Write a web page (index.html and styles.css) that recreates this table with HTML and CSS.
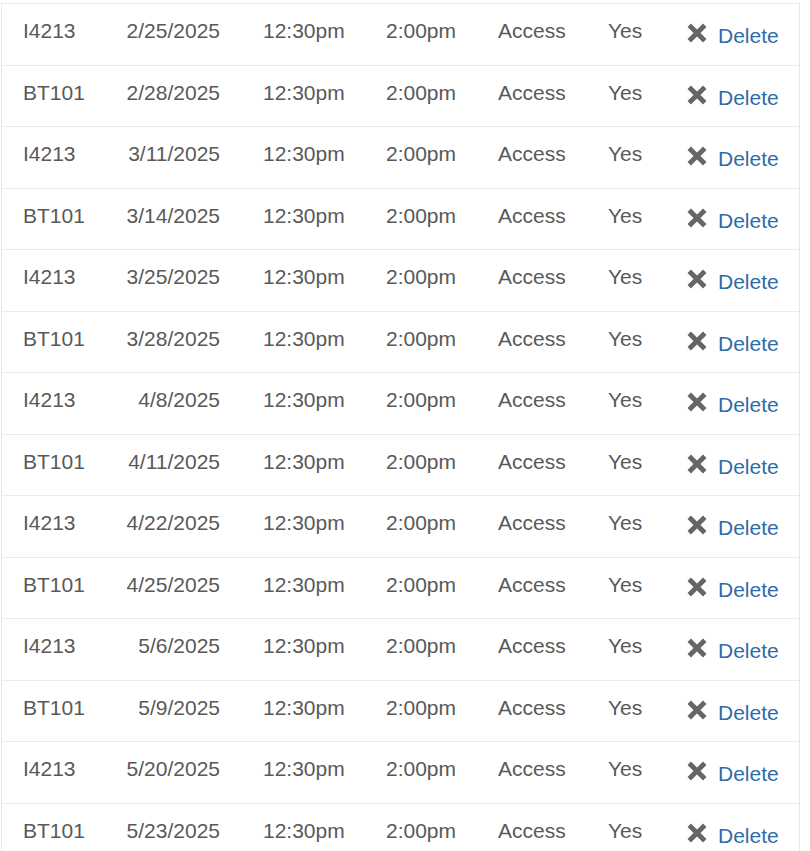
FILE: index.html
```html
<!DOCTYPE html>
<html>
<head>
<meta charset="utf-8">
<link rel="stylesheet" href="styles.css">
</head>
<body>
<div class="schedule">
  <div class="row"><div class="c course">I4213</div><div class="c date">2/25/2025</div><div class="c">12:30pm</div><div class="c">2:00pm</div><div class="c">Access</div><div class="c">Yes</div><div class="c action"><svg class="x" viewBox="0 0 18 18"><path d="M2 2L16 16M16 2L2 16"/></svg><a href="#">Delete</a></div></div>
  <div class="row"><div class="c course">BT101</div><div class="c date">2/28/2025</div><div class="c">12:30pm</div><div class="c">2:00pm</div><div class="c">Access</div><div class="c">Yes</div><div class="c action"><svg class="x" viewBox="0 0 18 18"><path d="M2 2L16 16M16 2L2 16"/></svg><a href="#">Delete</a></div></div>
  <div class="row"><div class="c course">I4213</div><div class="c date">3/11/2025</div><div class="c">12:30pm</div><div class="c">2:00pm</div><div class="c">Access</div><div class="c">Yes</div><div class="c action"><svg class="x" viewBox="0 0 18 18"><path d="M2 2L16 16M16 2L2 16"/></svg><a href="#">Delete</a></div></div>
  <div class="row"><div class="c course">BT101</div><div class="c date">3/14/2025</div><div class="c">12:30pm</div><div class="c">2:00pm</div><div class="c">Access</div><div class="c">Yes</div><div class="c action"><svg class="x" viewBox="0 0 18 18"><path d="M2 2L16 16M16 2L2 16"/></svg><a href="#">Delete</a></div></div>
  <div class="row"><div class="c course">I4213</div><div class="c date">3/25/2025</div><div class="c">12:30pm</div><div class="c">2:00pm</div><div class="c">Access</div><div class="c">Yes</div><div class="c action"><svg class="x" viewBox="0 0 18 18"><path d="M2 2L16 16M16 2L2 16"/></svg><a href="#">Delete</a></div></div>
  <div class="row"><div class="c course">BT101</div><div class="c date">3/28/2025</div><div class="c">12:30pm</div><div class="c">2:00pm</div><div class="c">Access</div><div class="c">Yes</div><div class="c action"><svg class="x" viewBox="0 0 18 18"><path d="M2 2L16 16M16 2L2 16"/></svg><a href="#">Delete</a></div></div>
  <div class="row"><div class="c course">I4213</div><div class="c date">4/8/2025</div><div class="c">12:30pm</div><div class="c">2:00pm</div><div class="c">Access</div><div class="c">Yes</div><div class="c action"><svg class="x" viewBox="0 0 18 18"><path d="M2 2L16 16M16 2L2 16"/></svg><a href="#">Delete</a></div></div>
  <div class="row"><div class="c course">BT101</div><div class="c date">4/11/2025</div><div class="c">12:30pm</div><div class="c">2:00pm</div><div class="c">Access</div><div class="c">Yes</div><div class="c action"><svg class="x" viewBox="0 0 18 18"><path d="M2 2L16 16M16 2L2 16"/></svg><a href="#">Delete</a></div></div>
  <div class="row"><div class="c course">I4213</div><div class="c date">4/22/2025</div><div class="c">12:30pm</div><div class="c">2:00pm</div><div class="c">Access</div><div class="c">Yes</div><div class="c action"><svg class="x" viewBox="0 0 18 18"><path d="M2 2L16 16M16 2L2 16"/></svg><a href="#">Delete</a></div></div>
  <div class="row"><div class="c course">BT101</div><div class="c date">4/25/2025</div><div class="c">12:30pm</div><div class="c">2:00pm</div><div class="c">Access</div><div class="c">Yes</div><div class="c action"><svg class="x" viewBox="0 0 18 18"><path d="M2 2L16 16M16 2L2 16"/></svg><a href="#">Delete</a></div></div>
  <div class="row"><div class="c course">I4213</div><div class="c date">5/6/2025</div><div class="c">12:30pm</div><div class="c">2:00pm</div><div class="c">Access</div><div class="c">Yes</div><div class="c action"><svg class="x" viewBox="0 0 18 18"><path d="M2 2L16 16M16 2L2 16"/></svg><a href="#">Delete</a></div></div>
  <div class="row"><div class="c course">BT101</div><div class="c date">5/9/2025</div><div class="c">12:30pm</div><div class="c">2:00pm</div><div class="c">Access</div><div class="c">Yes</div><div class="c action"><svg class="x" viewBox="0 0 18 18"><path d="M2 2L16 16M16 2L2 16"/></svg><a href="#">Delete</a></div></div>
  <div class="row"><div class="c course">I4213</div><div class="c date">5/20/2025</div><div class="c">12:30pm</div><div class="c">2:00pm</div><div class="c">Access</div><div class="c">Yes</div><div class="c action"><svg class="x" viewBox="0 0 18 18"><path d="M2 2L16 16M16 2L2 16"/></svg><a href="#">Delete</a></div></div>
  <div class="row"><div class="c course">BT101</div><div class="c date">5/23/2025</div><div class="c">12:30pm</div><div class="c">2:00pm</div><div class="c">Access</div><div class="c">Yes</div><div class="c action"><svg class="x" viewBox="0 0 18 18"><path d="M2 2L16 16M16 2L2 16"/></svg><a href="#">Delete</a></div></div>
</div>
</body>
</html>
```
FILE: styles.css
```css
html, body {
  margin: 0;
  padding: 0;
  background: #fff;
  overflow: hidden;
}
body {
  font-family: "Liberation Sans", Arial, sans-serif;
  font-size: 21px;
  color: #595959;
}
.schedule {
  margin: 3px 0 0 1px;
  width: 799px;
  box-sizing: border-box;
  border-left: 1px solid #e8e8e8;
  border-right: 1px solid #e8e8e8;
}
.row {
  display: grid;
  grid-template-columns: 101px 137px 123px 112px 110px 80px 1fr;
  height: 61.5px;
  box-sizing: border-box;
  border-top: 1px solid #ececec;
}
.c {
  padding: 12px 0 0 23px;
  line-height: 30px;
  white-space: nowrap;
}
.course {
  padding-left: 21px;
}
.date {
  padding-left: 0;
  padding-right: 20px;
  text-align: right;
}
.action {
  padding-top: 17px;
}
.x {
  width: 20px;
  height: 20px;
  vertical-align: 0;
  margin: 0 11px 0 -1px;
  display: inline-block;
}
.x path {
  stroke: #666;
  stroke-width: 4.4;
  stroke-linecap: butt;
  fill: none;
}
.action a {
  color: #2f6ca6;
  text-decoration: none;
}
```
